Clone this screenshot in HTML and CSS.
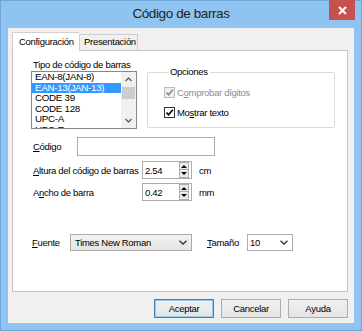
FILE: index.html
```html
<!DOCTYPE html>
<html lang="es">
<head>
    <meta charset="UTF-8">
    <title>Código de barras</title>
    <link rel="stylesheet" href="styles.css">
</head>
<body>
    <div class="window">
        <div class="titlebar">
            <span class="title">Código de barras</span>
            <button class="close" type="button" aria-label="Cerrar">
                <svg width="9" height="9" viewBox="0 0 9 9"><path d="M1 1 L8 8 M8 1 L1 8" stroke="#fff" stroke-width="2" fill="none"/></svg>
            </button>
        </div>
        <div class="client">
            <div class="tabs">
                <div class="tab active">Configuración</div>
                <div class="tab">Presentación</div>
            </div>
            <div class="panel">
                <div class="top">
                    <div class="type-col">
                        <div class="caption">Tipo de código de barras</div>
                        <div class="listbox">
                            <ul class="items">
                                <li>EAN-8(JAN-8)</li>
                                <li class="selected">EAN-13(JAN-13)</li>
                                <li>CODE 39</li>
                                <li>CODE 128</li>
                                <li>UPC-A</li>
                                <li>UPC-E</li>
                            </ul>
                            <div class="scrollbar">
                                <span class="sb-btn"><svg width="7" height="5" viewBox="0 0 7 5"><path d="M0.5 4 L3.5 1 L6.5 4" stroke="#606060" stroke-width="1.4" fill="none"/></svg></span>
                                <span class="sb-track"><span class="sb-thumb"></span></span>
                                <span class="sb-btn"><svg width="7" height="5" viewBox="0 0 7 5"><path d="M0.5 1 L3.5 4 L6.5 1" stroke="#606060" stroke-width="1.4" fill="none"/></svg></span>
                            </div>
                        </div>
                    </div>
                    <fieldset class="options">
                        <legend>Opciones</legend>
                        <div class="check disabled">
                            <span class="box"><svg width="9" height="9" viewBox="0 0 9 9"><path d="M1.5 4.5 L3.5 6.8 L7.8 1.8" stroke="#8a8a8a" stroke-width="1.6" fill="none"/></svg></span>
                            C<u>o</u>mprobar dígitos
                        </div>
                        <div class="check">
                            <span class="box"><svg width="9" height="9" viewBox="0 0 9 9"><path d="M1.5 4.5 L3.5 6.8 L7.8 1.8" stroke="#000" stroke-width="1.6" fill="none"/></svg></span>
                            Mo<u>s</u>trar texto
                        </div>
                    </fieldset>
                </div>

                <div class="row code-row">
                    <span class="label w-code"><u>C</u>ódigo</span>
                    <span class="textbox"></span>
                </div>
                <div class="row spin-row first">
                    <span class="label w-spin"><u>A</u>ltura del código de barras</span>
                    <span class="spin">
                        <span class="spin-value">2.54</span>
                        <span class="spin-btns"><span class="spin-btn up"></span><span class="spin-btn down"></span></span>
                    </span>
                    <span class="unit">cm</span>
                </div>
                <div class="row spin-row">
                    <span class="label w-spin">A<u>n</u>cho de barra</span>
                    <span class="spin">
                        <span class="spin-value">0.42</span>
                        <span class="spin-btns"><span class="spin-btn up"></span><span class="spin-btn down"></span></span>
                    </span>
                    <span class="unit">mm</span>
                </div>

                <div class="row font-row">
                    <span class="label w-font"><u>F</u>uente</span>
                    <span class="combo readonly">
                        Times New Roman
                        <svg width="8" height="5" viewBox="0 0 8 5"><path d="M0.5 0.8 L4 4 L7.5 0.8" stroke="#333" stroke-width="1.3" fill="none"/></svg>
                    </span>
                    <span class="label w-size"><u>T</u>amaño</span>
                    <span class="combo size">
                        10
                        <svg width="8" height="5" viewBox="0 0 8 5"><path d="M0.5 0.8 L4 4 L7.5 0.8" stroke="#333" stroke-width="1.3" fill="none"/></svg>
                    </span>
                </div>
            </div>
            <div class="buttons">
                <button type="button" class="default">Aceptar</button>
                <button type="button">Cancelar</button>
                <button type="button">Ayuda</button>
            </div>
        </div>
    </div>
</body>
</html>
```

FILE: styles.css
```css
body {
    margin: 0;
    font-family: "Liberation Sans", Arial, sans-serif;
    font-size: 9.5px;
    letter-spacing: -0.3px;
    color: #000;
}

.window {
    box-sizing: border-box;
    width: 362px;
    height: 331px;
    background-color: #8fc4f1;
    border: 1px solid #6ea6da;
    padding: 0 7px 7px;
    display: flex;
    flex-direction: column;
    position: relative;
}

.titlebar {
    height: 27px;
    box-sizing: border-box;
    padding-top: 4px;
    text-align: center;
}

.title {
    font-size: 13.5px;
    letter-spacing: -0.4px;
    line-height: 18px;
    color: #1e1e1e;
}

.close {
    position: absolute;
    top: -1px;
    right: 6px;
    width: 26px;
    height: 20px;
    border: none;
    padding: 0;
    background-color: #c75050;
    display: flex;
    align-items: center;
    justify-content: center;
}

.client {
    flex: 1;
    background-color: #f0f0f0;
    padding: 4px 6px 0 4px;
    display: flex;
    flex-direction: column;
}

/* pestañas */
.tabs {
    display: flex;
    height: 18px;
    align-items: flex-end;
}

.tab {
    box-sizing: border-box;
    height: 16px;
    line-height: 14px;
    border: 1px solid #d0d0d0;
    border-bottom: none;
    background-color: #f0f0f0;
    padding-left: 4px;
}

.tab.active {
    width: 67px;
    height: 19px;
    line-height: 17px;
    margin-bottom: -1px;
    background-color: #fff;
    padding-left: 6px;
    position: relative;
    z-index: 1;
    border-right: none;
}

.tab:not(.active) {
    width: 59px;
}

.panel {
    box-sizing: border-box;
    height: 242px;
    background-color: #fff;
    border: 1px solid #c3c3c3;
    padding-left: 18px;
}

.top {
    display: flex;
    align-items: flex-start;
    height: 78px;
}

.caption {
    margin-top: 7px;
    line-height: 13px;
    padding-left: 2px;
}

.listbox {
    box-sizing: border-box;
    width: 106px;
    height: 58px;
    border: 1px solid #828790;
    display: flex;
    overflow: hidden;
}

.items {
    list-style: none;
    margin: 0;
    padding: 0;
    flex: 1;
    overflow: hidden;
    font-size: 9.8px;
}

.items li {
    line-height: 10.5px;
    padding-left: 3px;
    white-space: nowrap;
}

.items li.selected {
    background-color: #3399ff;
    color: #fff;
}

.scrollbar {
    width: 15px;
    background-color: #f0f0f0;
    display: flex;
    flex-direction: column;
}

.sb-btn {
    height: 15px;
    display: flex;
    align-items: center;
    justify-content: center;
}

.sb-track {
    flex: 1;
    padding: 0 1px;
}

.sb-thumb {
    display: block;
    height: 12px;
    background-color: #cdcdcd;
}

.options {
    box-sizing: border-box;
    width: 188px;
    margin: 15px 0 0 10px;
    padding: 8px 0 9px 16px;
    border: 1px solid #dcdcdc;
    border-radius: 2px;
    min-width: 0;
}

.options legend {
    padding: 0 2px;
    margin-left: 4px;
    line-height: 12px;
}

.check {
    display: flex;
    align-items: center;
    height: 12px;
}

.check + .check {
    margin-top: 8px;
}

.box {
    box-sizing: border-box;
    width: 11px;
    height: 11px;
    border: 1px solid #333;
    background-color: #fff;
    margin-right: 2px;
    display: flex;
    align-items: center;
    justify-content: center;
}

.check.disabled {
    color: #8d8d8d;
}

.check.disabled .box {
    border-color: #bcbcbc;
    background-color: #f0f0f0;
}

/* filas de campos */
.row {
    display: flex;
    align-items: center;
}

.label {
    box-sizing: border-box;
    padding-left: 2px;
    flex: none;
    white-space: nowrap;
}

.w-code { width: 46px; }
.w-spin { width: 111px; }
.w-font { width: 39px; padding-left: 1px; }
.w-size { width: 40px; margin-left: 15px; padding-left: 0; }

.code-row {
    margin-top: 8px;
    height: 19px;
}

.textbox {
    box-sizing: border-box;
    width: 138px;
    height: 19px;
    border: 1px solid #abadb3;
    background-color: #fff;
}

.spin-row {
    margin-top: 4px;
    height: 18px;
}

.spin-row.first {
    margin-top: 5px;
}

.spin {
    box-sizing: border-box;
    width: 50px;
    height: 18px;
    border: 1px solid #abadb3;
    display: flex;
    align-items: center;
    padding-left: 2px;
}

.spin-btns {
    margin-left: auto;
    margin-right: 2px;
    display: flex;
    flex-direction: column;
}

.spin-btn {
    box-sizing: border-box;
    width: 10px;
    height: 8px;
    border: 1px solid #acacac;
    background-color: #ececec;
    display: flex;
    align-items: center;
    justify-content: center;
}

.spin-btn.down {
    border-top: none;
}

.spin-btn.up::after,
.spin-btn.down::after {
    content: "";
    border-left: 3px solid transparent;
    border-right: 3px solid transparent;
}

.spin-btn.up::after {
    border-bottom: 3px solid #000;
}

.spin-btn.down::after {
    border-top: 3px solid #000;
}

.unit {
    margin-left: 7px;
}

.font-row {
    margin-top: 33px;
    height: 17px;
}

.combo {
    box-sizing: border-box;
    height: 17px;
    border: 1px solid #acacac;
    display: flex;
    align-items: center;
    justify-content: space-between;
    padding: 0 4px 0 4px;
}

.combo.readonly {
    width: 122px;
    background: linear-gradient(#f2f2f2, #e5e5e5);
}

.combo.size {
    width: 46px;
    background-color: #fff;
    padding-left: 2px;
    border-color: #abadb3;
}

/* botones */
.buttons {
    display: flex;
    justify-content: flex-end;
    gap: 7px;
    margin-top: 7px;
}

.buttons button {
    box-sizing: border-box;
    width: 60px;
    height: 19px;
    padding: 0;
    font-family: inherit;
    font-size: 9.5px;
    letter-spacing: -0.3px;
    color: #000;
    background: linear-gradient(#f0f0f0, #e5e5e5);
    border: 1px solid #acacac;
}

.buttons button.default {
    border-color: #3c7fb1;
    box-shadow: inset 0 0 0 1px #9ccbf0;
}
```
